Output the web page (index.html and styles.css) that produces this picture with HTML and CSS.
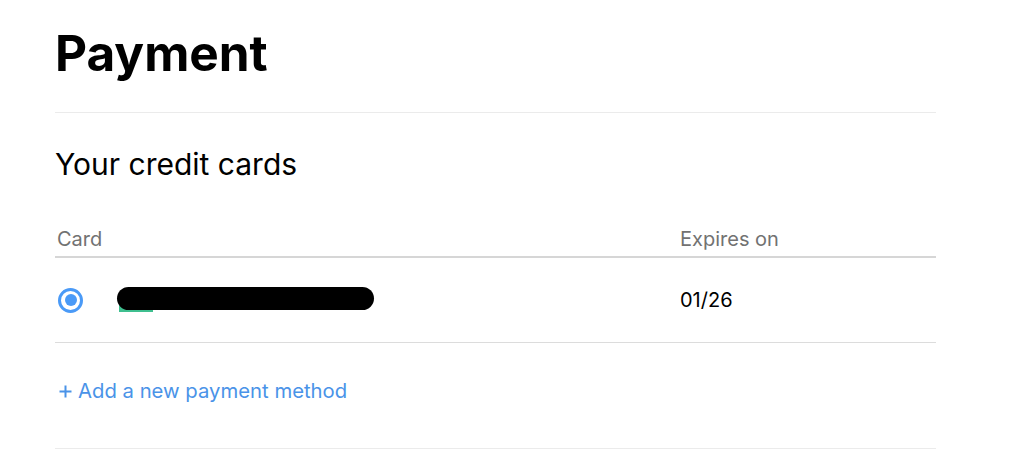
FILE: index.html
```html
<!doctype html>
<html lang="en">
<head>
    <meta charset="utf-8"/>
    <title>Payment</title>
    <link rel="stylesheet" href="styles.css">
</head>
<body>

    <!--page-->
    <div class="page">
        <h1 class="title">Payment</h1>

        <!--cards-->
        <div class="section">
            <h2 class="subtitle">Your credit cards</h2>

            <div class="table">
                <div class="row head">
                    <div class="cell">Card</div>
                    <div class="cell">Expires on</div>
                </div>
                <div class="row item">
                    <div class="cell card">
                        <span class="radio"><span class="dot"></span></span>
                        <span class="masked">
                            <span class="logo"></span>
                            <span class="bar"></span>
                        </span>
                    </div>
                    <div class="cell">01/26</div>
                </div>
            </div>

            <a class="add" href="#">
                <svg class="plus" width="13" height="13" viewBox="0 0 13 13"><path d="M6.5 0.5v12M0.5 6.5h12" stroke="currentColor" stroke-width="2" fill="none"/></svg>
                Add a new payment method
            </a>
        </div>
    </div>

</body>
</html>
```

FILE: styles.css
```css
* {
    padding: 0;
    margin: 0;
    box-sizing: border-box;
}

body {
    font-family: Inter, "Noto Sans", sans-serif;
    color: #000;
    background: #fff;
}

.page {
    width: 881px;
    margin-left: 55px;
}

.title {
    font-size: 49.5px;
    font-weight: 700;
    line-height: 58px;
    padding-top: 24px;
    padding-bottom: 30px;
    border-bottom: 1px solid #ebebeb;
}

.subtitle {
    font-size: 30px;
    font-weight: 400;
    line-height: 34px;
    margin-top: 34px;
}

.table {
    margin-top: 46px;
}

.row {
    display: grid;
    grid-template-columns: 625px 1fr;
    align-items: center;
}

.head {
    font-size: 20px;
    color: #727272;
    line-height: 24px;
    padding-bottom: 5px;
    border-bottom: 2px solid #d6d6d6;
}

.head .cell:first-child {
    padding-left: 2px;
}

.item {
    height: 85px;
    font-size: 20px;
    border-bottom: 1px solid #dcdcdc;
}

.card {
    display: flex;
    align-items: center;
}

.radio {
    width: 25px;
    height: 25px;
    border: 3px solid #4a9af7;
    border-radius: 50%;
    margin-left: 3px;
    display: flex;
    align-items: center;
    justify-content: center;
}

.dot {
    width: 12px;
    height: 12px;
    border-radius: 50%;
    background: #4a9af7;
}

.masked {
    position: relative;
    width: 257px;
    height: 26px;
    margin-left: 34px;
}

.logo {
    position: absolute;
    left: 2px;
    top: 6px;
    width: 34px;
    height: 19px;
    background: #3fbf8f;
}

.bar {
    position: absolute;
    left: 0;
    top: 0;
    width: 257px;
    height: 23px;
    border-radius: 12px;
    background: #000;
}

.add {
    display: flex;
    align-items: center;
    gap: 6px;
    font-size: 20.3px;
    line-height: 24px;
    color: #4a93e8;
    text-decoration: none;
    padding-left: 4px;
    padding-top: 36px;
    padding-bottom: 45px;
    border-bottom: 1px solid #ebebeb;
}

.plus {
    flex: none;
}
```
